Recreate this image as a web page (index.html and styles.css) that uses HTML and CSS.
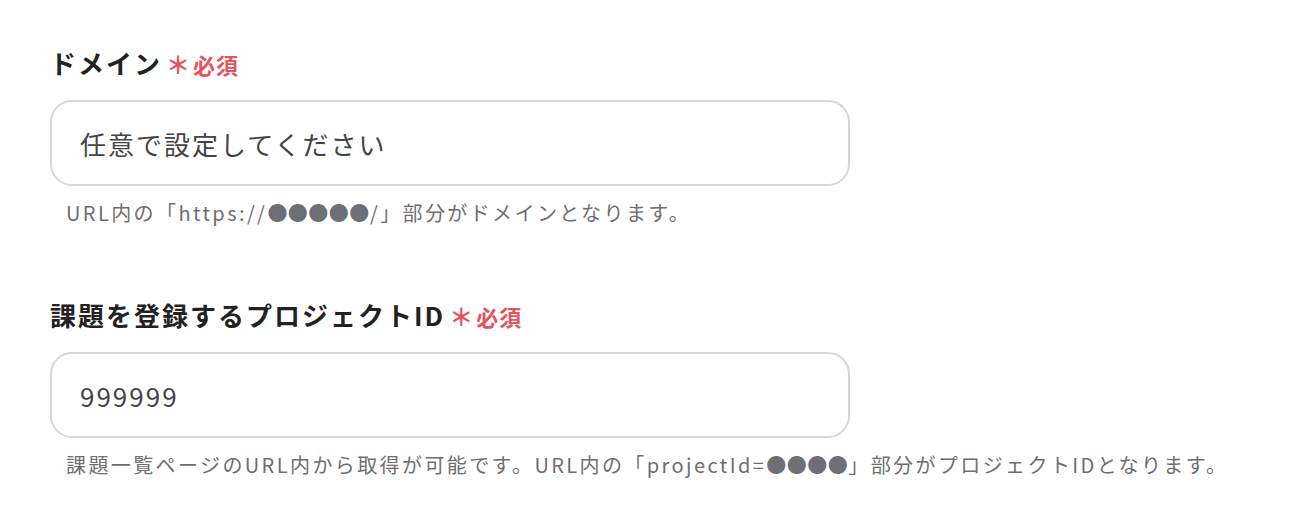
FILE: index.html
```html
<!DOCTYPE html>
<html lang="ja">

<head>
    <meta charset="UTF-8">
    <meta name="viewport" content="width=device-width, initial-scale=1.0">
    <title>設定</title>
    <link rel="stylesheet" href="styles.css">
</head>

<body>
    <form class="settings">
        <div class="form-group">
            <label for="domain">ドメイン<span class="mark">＊</span><span class="required">必須</span></label>
            <input type="text" id="domain" value="任意で設定してください">
            <p class="help">URL内の「https://<span class="dots">●●●●●</span>/」部分がドメインとなります。</p>
        </div>
        <div class="form-group">
            <label for="projectId">課題を登録するプロジェクトID<span class="mark">＊</span><span class="required">必須</span></label>
            <input type="text" id="projectId" value="999999">
            <p class="help">課題一覧ページのURL内から取得が可能です。URL内の「projectId=<span class="dots">●●●●</span>」部分がプロジェクトIDとなります。</p>
        </div>
    </form>
</body>

</html>
```

FILE: styles.css
```css
body {
    margin: 0;
    padding: 45px 0 0 50px;
    font-family: "Noto Sans CJK JP", "Noto Sans", sans-serif;
    background: #fff;
    color: #222;
}

.form-group {
    margin-bottom: 70px;
}

.form-group:last-child {
    margin-bottom: 0;
}

label {
    display: flex;
    align-items: baseline;
    height: 36px;
    line-height: 36px;
    font-size: 26px;
    font-weight: bold;
    letter-spacing: 2px;
    color: #222;
}

.mark {
    margin-left: 4px;
    font-size: 24px;
    letter-spacing: 0;
    color: #e5535c;
}

.required {
    margin-left: 3px;
    font-size: 22px;
    letter-spacing: 1px;
    color: #e5535c;
}

input[type="text"] {
    display: block;
    box-sizing: border-box;
    width: 800px;
    height: 86px;
    margin-top: 19px;
    padding: 0 28px;
    border: 2px solid #d7d7da;
    border-radius: 22px;
    font-family: inherit;
    font-size: 26px;
    letter-spacing: 2px;
    color: #444;
    outline: none;
}

.help {
    margin: 13px 0 0 16px;
    line-height: 28px;
    font-size: 20px;
    letter-spacing: 2.4px;
    color: #6e6e6e;
}

.dots {
    color: #6b6f76;
    letter-spacing: 0.5px;
}
```
